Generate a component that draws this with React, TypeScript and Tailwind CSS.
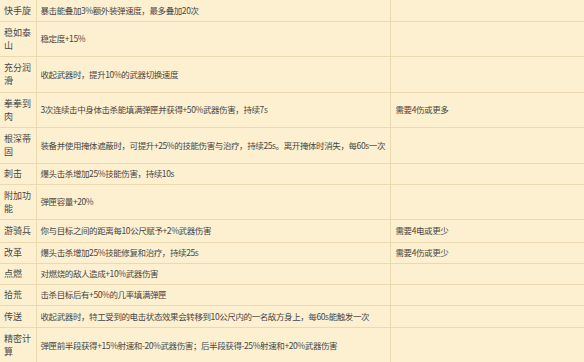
const ROWS: { name: string; desc: string; note?: string; h: string }[] = [
  { name: '快手旋', desc: '暴击能叠加3%额外装弹速度，最多叠加20次', h: 'h-[21px]' },
  { name: '稳如泰山', desc: '稳定度+15%', h: 'h-[35px]' },
  { name: '充分润滑', desc: '收起武器时，提升10%的武器切换速度', h: 'h-[36px]' },
  { name: '拳拳到肉', desc: '3次连续击中身体击杀能填满弹匣并获得+50%武器伤害，持续7s', note: '需要4伤或更多', h: 'h-[35px]' },
  { name: '根深蒂固', desc: '装备并使用掩体遮蔽时，可提升+25%的技能伤害与治疗，持续25s。离开掩体时消失，每60s一次', h: 'h-[36px]' },
  { name: '刺击', desc: '爆头击杀增加25%技能伤害，持续10s', h: 'h-[21px]' },
  { name: '附加功能', desc: '弹匣容量+20%', h: 'h-[35px]' },
  { name: '游骑兵', desc: '你与目标之间的距离每10公尺赋予+2%武器伤害', note: '需要4电或更少', h: 'h-[23px]' },
  { name: '改革', desc: '爆头击杀增加25%技能修复和治疗，持续25s', note: '需要4伤或更少', h: 'h-[21px]' },
  { name: '点燃', desc: '对燃烧的敌人造成+10%武器伤害', h: 'h-[21px]' },
  { name: '拾荒', desc: '击杀目标后有+50%的几率填满弹匣', h: 'h-[21px]' },
  { name: '传送', desc: '收起武器时，特工受到的电击状态效果会转移到10公尺内的一名敌方身上，每60s能触发一次', h: 'h-[22px]' },
  { name: '精密计算', desc: '弹匣前半段获得+15%射速和-20%武器伤害；后半段获得-25%射速和+20%武器伤害', h: 'h-[36px]' },
];

export default function App() {
  return (
    <div
      className="relative w-[584px] h-[362px] overflow-hidden bg-[#fdf0d0] text-[#474747]"
      style={{ fontFamily: '"Noto Sans CJK SC", "Noto Sans", sans-serif' }}
    >
      <table className="w-full border-collapse table-fixed">
        <colgroup>
          <col className="w-[36px]" />
          <col className="w-[354px]" />
          <col />
        </colgroup>
        <tbody>
          {ROWS.map((r) => (
            <tr key={r.name} className={`${r.h} border-b border-[#ebd9b0]`}>
              <td className="border-r border-[#ebd9b0] pl-[4px] pr-[2px] py-0 align-middle text-[9px] leading-[13px] break-all">
                {r.name}
              </td>
              <td className="border-r border-[#ebd9b0] pl-[4px] pr-[4px] py-0 align-middle text-[8.5px] leading-[13px] tracking-[-0.4px] whitespace-nowrap">
                {r.desc}
              </td>
              <td className="pl-[5px] py-0 align-middle text-[8.5px] leading-[13px] tracking-[-0.4px] whitespace-nowrap">
                {r.note}
              </td>
            </tr>
          ))}
        </tbody>
      </table>
    </div>
  );
}
